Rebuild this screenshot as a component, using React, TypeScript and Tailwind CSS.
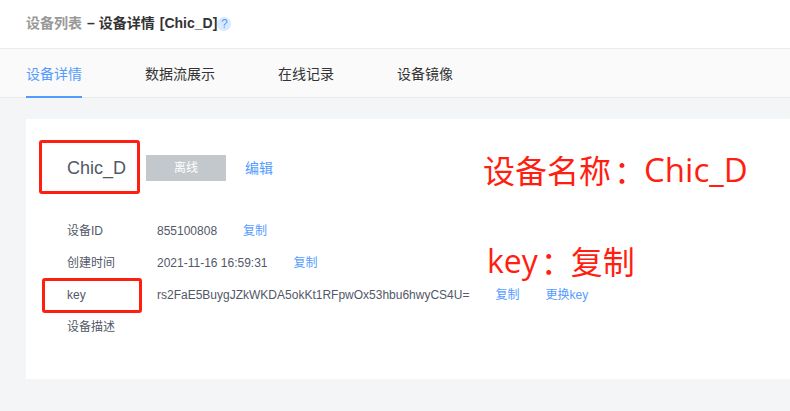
import React from "react";

const tabs = ["设备详情", "数据流展示", "在线记录", "设备镜像"];

type Row = { label: string; value?: string; actions?: string[] };

const rows: Row[] = [
  { label: "设备ID", value: "855100808", actions: ["复制"] },
  { label: "创建时间", value: "2021-11-16 16:59:31", actions: ["复制"] },
  { label: "key", value: "rs2FaE5BuygJZkWKDA5okKt1RFpwOx53hbu6hwyCS4U=", actions: ["复制", "更换key"] },
  { label: "设备描述" },
];

export default function App() {
  return (
    <div className="relative h-[411px] w-[790px] overflow-hidden whitespace-nowrap bg-[#f4f5f7] font-['Liberation_Sans','Noto_Sans_CJK_SC',sans-serif] text-[#525868]">
      <header className="flex h-[49px] items-center border-b border-[#ebebeb] bg-white pb-0.5 pl-[26px] text-sm leading-5 text-[#333]">
        <span className="font-bold text-[#999]">设备列表</span>
        <span className="ml-[5px] font-bold">–</span>
        <span className="ml-1 font-bold">设备详情</span>
        <span className="ml-[5px] font-bold">[Chic_D]</span>
        <span className="mt-px flex size-3.5 items-center justify-center rounded-full bg-[#d9eaff] text-xs leading-none text-[#549bff]">?</span>
      </header>
      <nav className="flex h-[49px] gap-[63px] border-b border-[#ebebeb] bg-[#fafafa] pl-[26px] text-sm text-[#333]">
        {tabs.map((tab, i) => (
          <a
            key={tab}
            className={
              i === 0
                ? "-mb-px h-[49px] border-b-2 border-[#549bff] pt-[15px] leading-5 text-[#549bff]"
                : "pt-[15px] leading-5"
            }
          >
            {tab}
          </a>
        ))}
      </nav>
      <main className="ml-[26px] mt-[21px] h-[260px] bg-white pl-[41px] pt-9">
        <div className="flex h-[26px] items-center">
          <h1 className="w-[79px] text-lg leading-6">Chic_D</h1>
          <span className="flex h-[26px] w-20 items-center justify-center bg-[#c3c8cc] text-xs text-white">离线</span>
          <a className="ml-[19px] text-sm text-[#549bff]">编辑</a>
        </div>
        <div className="mt-[34px] text-xs">
          {rows.map((row) => (
            <div key={row.label} className="flex h-8 items-center">
              <span className="w-[90px]">{row.label}</span>
              <span>{row.value}</span>
              {row.actions?.map((action) => (
                <a key={action} className="ml-[26px] text-[#549bff]">
                  {action}
                </a>
              ))}
            </div>
          ))}
        </div>
      </main>
      <div className="absolute left-[39px] top-[140px] h-[54px] w-[101px] rounded-[3px] border-[3px] border-[#ff1e10]" />
      <div className="absolute left-[42px] top-[278px] h-[35px] w-[100px] rounded-[3px] border-[3px] border-[#ff1e10]" />
      <div className="absolute left-[483px] top-[151px] flex font-['Open_Sans','Noto_Sans_CJK_SC',sans-serif] text-[32px] leading-10 text-[#ff1e10]">
        <span>设备名称</span>
        <span className="pl-[3px]">：</span>
        <span className="-ml-0.5 -mt-px text-[33px]">Chic_D</span>
      </div>
      <div className="absolute left-[487px] top-[242px] flex font-['Open_Sans','Noto_Sans_CJK_SC',sans-serif] text-[32px] leading-10 text-[#ff1e10]">
        <span className="-mt-px">key</span>
        <span className="pl-[3px]">：</span>
        <span className="-ml-0.5">复制</span>
      </div>
    </div>
  );
}
